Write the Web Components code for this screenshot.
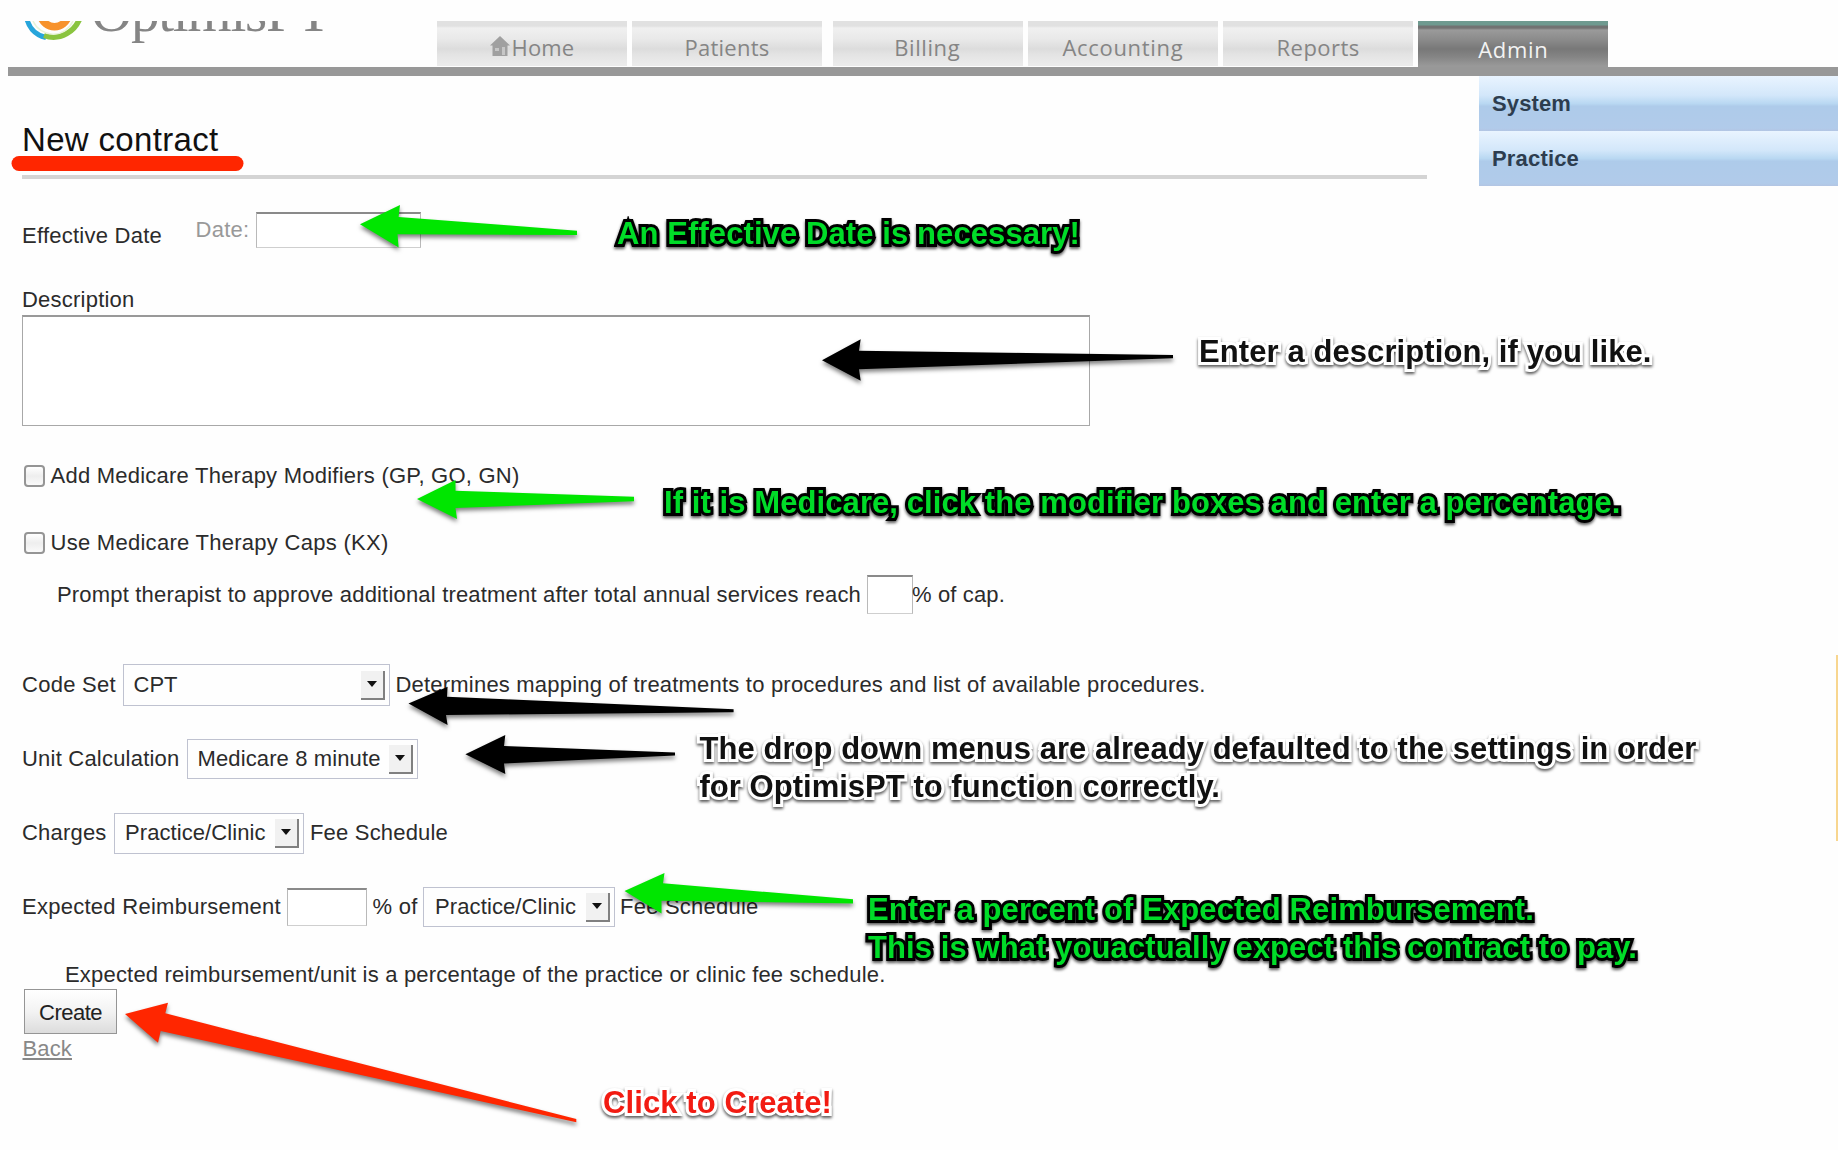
<!DOCTYPE html>
<html lang="en">
<head>
<meta charset="utf-8">
<title>New contract</title>
<style>
html,body{margin:0;background:#fefefe;overflow:hidden}
body{width:1838px;height:1150px;font:22px/26px "Liberation Sans",Arial,sans-serif;color:#2b2b2b}
</style>
</head>
<body>
<contract-page></contract-page>
<script>
function define(name, html, setup) {
  customElements.define(name, class extends HTMLElement {
    connectedCallback() {
      if (this.shadowRoot) return;
      const t = document.createElement('template');
      t.innerHTML = html;
      this.attachShadow({ mode: 'open' }).append(t.content.cloneNode(true));
      if (setup) setup(this, this.shadowRoot);
    }
  });
}

define('contract-page', `
<style>
:host{display:flex;flex-direction:column;position:relative;width:1838px;height:1150px;overflow:hidden;padding-top:21px;box-sizing:border-box}
main{display:flex;justify-content:space-between;flex:1}
note-layer{position:absolute;left:0;top:0}
</style>
<app-header></app-header>
<main><contract-form></contract-form><side-menu></side-menu></main>
<note-layer></note-layer>`);

define('app-header', `
<style>
:host{display:flex;height:54.5px;margin-left:8px;overflow:hidden;flex-direction:column;flex:none}
.top{display:flex;height:45.5px;overflow:hidden}
.bar{height:9px;background:#989898;flex:none}
brand-logo{width:429px}
nav{display:flex}
nav-tab{margin-right:5.5px}
nav-tab.wide{margin-right:11px}
</style>
<div class="top"><brand-logo></brand-logo>
<nav>
<nav-tab home><fit-text w="62.5">Home</fit-text></nav-tab>
<nav-tab class="wide"><fit-text w="85">Patients</fit-text></nav-tab>
<nav-tab><fit-text w="66" style="margin-right:1px">Billing</fit-text></nav-tab>
<nav-tab><fit-text w="121">Accounting</fit-text></nav-tab>
<nav-tab><fit-text w="83">Reports</fit-text></nav-tab>
<nav-tab active><fit-text w="70">Admin</fit-text></nav-tab>
</nav></div><div class="bar"></div>`);

define('brand-logo', `
<style>
:host{display:flex;height:45px;overflow:hidden;position:relative;flex:none}
svg{width:78px;height:22px;flex:none}
.t{font:57px/60px "Liberation Serif",serif;color:#858585;margin-left:5px;margin-top:-39px}
</style>
<svg viewBox="8 21 78 22"><g fill="none">
<path d="M26 13C27 27 35 35 46 37.500" stroke="#27a5db" stroke-width="5"/>
<path d="M44 35.500C60 41 76 32 81 15" stroke="#8ac43f" stroke-width="5.500"/>
<path d="M33 21C40 37 64 40 73 21" stroke="#e9f3d8" stroke-width="1.500"/>
<path d="M40 14C44 31 65 31 69 14" stroke="#f7922c" stroke-width="7.500"/>
</g></svg>
<fit-text class="t" w="239">OptimisPT</fit-text>`);

define('nav-tab', `
<style>
:host{display:flex;justify-content:center;width:189.700px;height:45px;box-sizing:border-box;padding-top:11px;color:#858585;font:22px/30px "Open Sans","Noto Sans",sans-serif;
background:linear-gradient(#e1e1e1 0 5px,#f0f0f0 7px,#e9e9e9 18px,#dcdcdc 28px,#e3e3e3 33px,#ebebeb 43px)}
:host([active]){height:46px;padding-top:13px;color:#f3f3f3;background:linear-gradient(#6f9a90 0 4px,#727272 5px 7px,#9a9a9a 9px,#8c8c8c 18px,#787878 28px,#858585 36px,#999 45px)}
svg{display:none;width:20px;height:20px;margin:4px 2px 0 0}
:host([home]) svg{display:block}
</style>
<svg viewBox="0 0 20 20"><path d="M10 0L20 9.500H17.500V20H2.500V9.500H0Z" fill="#a0a0a0"/><path d="M5 12h4v3H5zM12 11h3v8h-3z" fill="#c6c6c6"/></svg>
<slot></slot>`);

define('side-menu', `
<style>
:host{display:flex;flex-direction:column;width:359px;flex:none}
.item{height:55px;box-sizing:border-box;padding:15.500px 0 0 13px;font-weight:bold;color:#2d3d4f;background:linear-gradient(#e9f4ff 0,#d3e7fa 35%,#b9d8f2 50%,#aecbea 55%,#b1cbea 95%,#b3c5e3)}
.tip{width:2px;height:186px;background:#f8d68f;margin:469px 0 0 auto}
</style>
<div class="item"><fit-text w="79">System</fit-text></div>
<div class="item"><fit-text w="87">Practice</fit-text></div>
<div class="tip"></div>`);

define('contract-form', `
<style>
:host{display:flex;flex-direction:column;width:1405px;margin-left:22px}
h1{font:33px/38px "Liberation Sans",Arial,sans-serif;color:#111;margin:45.500px 0 0 0;height:38px}
hr{width:1405px;height:4px;border:0;background:#d4d4d4;margin:15.500px 0 0}
form-row{height:26px}
textarea{display:block;box-sizing:border-box;width:1068px;height:111px;margin:2px 0 0;border:1.500px solid #a8a8a8;border-top:2px solid #999;resize:none;background:#fff}
.grey{color:#999}
a{color:#888;text-decoration:underline;text-underline-offset:2px;margin:2px 0 0 .5px}
button{width:93px;height:45px;margin:1px 0 0 2px;padding:2px 0 0;border:1.500px solid #959595;background:linear-gradient(#fff,#f3f3f3 50%,#dcdcdc);font:inherit;color:#222}
</style>
<h1><fit-text w="196.5">New contract</fit-text></h1>
<hr>
<form-row style="height:36px;margin-top:33.500px">
<fit-text w="140" style="margin-top:11px">Effective Date</fit-text>
<fit-text class="grey" w="54" style="margin-left:33.500px">Date:</fit-text>
<text-box style="width:165px;height:36px;margin-left:6.500px"></text-box></form-row>
<form-row style="margin-top:39px"><fit-text w="112.5">Description</fit-text></form-row>
<textarea></textarea>
<form-row style="margin-top:37px"><check-box></check-box><fit-text w="469" style="margin-left:6px">Add Medicare Therapy Modifiers (GP, GO, GN)</fit-text></form-row>
<form-row style="margin-top:41px"><check-box></check-box><fit-text w="338" style="margin-left:6px">Use Medicare Therapy Caps (KX)</fit-text></form-row>
<form-row style="height:39px;margin-top:19px"><fit-text w="804" style="margin-left:35px">Prompt therapist to approve additional treatment after total annual services reach</fit-text><text-box style="width:45.500px;height:39px;margin-left:6px"></text-box><fit-text w="93" style="margin-left:-.5px">% of cap.</fit-text></form-row>
<form-row style="height:42px;margin-top:50px"><fit-text w="94">Code Set</fit-text><drop-down style="width:267px;margin-left:6.500px"><fit-text w="44">CPT</fit-text></drop-down><fit-text w="810" style="margin-left:6px">Determines mapping of treatments to procedures and list of available procedures.</fit-text></form-row>
<form-row style="height:40px;margin-top:33px"><fit-text w="157.5">Unit Calculation</fit-text><drop-down style="width:231px;margin-left:7px"><fit-text w="183">Medicare 8 minute</fit-text></drop-down></form-row>
<form-row style="height:41px;margin-top:33.500px"><fit-text w="84.5">Charges</fit-text><drop-down style="width:189.500px;margin-left:7.500px"><fit-text w="140.500">Practice/Clinic</fit-text></drop-down><fit-text w="138" style="margin-left:6.500px">Fee Schedule</fit-text></form-row>
<form-row style="height:40px;margin-top:33.500px"><fit-text w="259">Expected Reimbursement</fit-text><text-box style="width:80px;height:38px;margin-left:5.500px"></text-box><fit-text w="45" style="margin-left:6px">% of</fit-text><drop-down style="width:192px;margin-left:5.500px"><fit-text w="141" style="margin-left:1px">Practice/Clinic</fit-text></drop-down><fit-text w="138.5" style="margin-left:5px">Fee Schedule</fit-text></form-row>
<form-row style="margin-top:35px"><fit-text w="820.5" style="margin-left:43px">Expected reimbursement/unit is a percentage of the practice or clinic fee schedule.</fit-text></form-row>
<button><fit-text w="63">Create</fit-text></button>
<a><fit-text w="49.5">Back</fit-text></a>`);

define('form-row', `<style>:host{display:flex;align-items:center;flex:none}</style><slot></slot>`);
define('text-box', `<style>:host{display:block;flex:none;box-sizing:border-box;background:#fff;border:1.500px solid #b9b9b9;border-top:2px solid #8a8a8a;border-bottom-color:#cfcfcf}</style>`);
define('check-box', `<style>:host{display:block;flex:none;box-sizing:border-box;width:21px;height:22px;margin-left:1.500px;border:2px solid #959595;border-radius:4px;background:linear-gradient(#fff,#eee 50%,#fafafa)}</style>`);
define('drop-down', `
<style>
:host{display:flex;flex:none;align-items:center;justify-content:space-between;align-self:stretch;box-sizing:border-box;border:1.500px solid #bfc2d0;background:#fefefe;padding:0 4px 0 10px}
.b{display:flex;align-items:center;justify-content:center;width:24px;height:29px;box-sizing:border-box;background:#f1f1f1;border-right:2.500px solid #808080;border-bottom:2.500px solid #808080}
svg{width:10px;height:6px}
</style><slot></slot><span class="b"><svg viewBox="0 0 10 6"><path d="M0 0H10L5 6Z" fill="#111"/></svg></span>`);

define('note-layer', `
<style>
:host{display:block;width:1838px;height:1150px;pointer-events:none}
svg{position:absolute;left:0;top:0}
.s{filter:drop-shadow(0 3px 2px rgba(0,0,0,.5))}
call-out{position:absolute}
</style>
<svg width="1838" height="1150" viewBox="0 0 1838 1150">
<rect x="11.500" y="156" width="232" height="15" rx="7.500" fill="#ff2600"/>
<g class="s"><g fill="#00e600">
<path d="M360 224.300L400 205L398.600 217L577 230.700V235L397.500 234.300L398.600 247.500Z"/>
<path d="M417 499L455.500 480V490.700L634 496.700V501.300L455.500 508L457 519Z"/>
<path d="M624.500 891L664.500 873L663 883.300L853 899.300V903.500L661.500 900.700V913.500Z"/></g>
<g fill="#000">
<path d="M822 360.300L860.700 339.300L859 350.700L1173 355V358.300L859 369.300L860.700 380.700Z"/>
<path d="M408.500 703.500L447.600 686.700L447 696.700L733.600 709.300V712.300L446 715L447.600 725Z"/>
<path d="M465.400 754.300L505.300 735L504 746L675 752.500V755.500L504 763.500L505.300 774Z"/></g>
<path fill="#ff2600" d="M125 1014L168 1002.700L165.300 1013.300L576.300 1119V1122.300L160.700 1031L158 1042.700Z"/></g>
</svg>
<call-out kind="green" style="left:617px;top:215px"><fit-text w="463">An Effective Date is necessary!</fit-text></call-out>
<call-out kind="black" style="left:1199px;top:333px"><fit-text w="452.5">Enter a description, if you like.</fit-text></call-out>
<call-out kind="green" style="left:664px;top:484px"><fit-text w="956.5">If it is Medicare, click the modifier boxes and enter a percentage.</fit-text></call-out>
<call-out kind="black" style="left:699.500px;top:730px"><fit-text w="997">The drop down menus are already defaulted to the settings in order</fit-text><fit-text w="520.5">for OptimisPT to function correctly.</fit-text></call-out>
<call-out kind="green" style="left:868px;top:891px"><fit-text w="666">Enter a percent of Expected Reimbursement.</fit-text><fit-text w="769">This is what youactually expect this contract to pay.</fit-text></call-out>
<call-out kind="red" style="left:603px;top:1084px"><fit-text w="229">Click to Create!</fit-text></call-out>`);

define('call-out', `
<style>
:host{display:flex;flex-direction:column;align-items:flex-start;font:bold 31px/37.700px "Liberation Sans",Arial,sans-serif;paint-order:stroke fill;-webkit-text-stroke:6px #fff;color:#111;filter:drop-shadow(0 2px 1.500px rgba(0,0,0,.65))}
:host([kind=green]){-webkit-text-stroke:6px #000;color:#00dc28}
:host([kind=red]){color:#f21b12}
</style><slot></slot>`);

/* Spreads its text over the advance width given in "w". */
define('fit-text', `<style>:host{display:inline-block;white-space:nowrap;flex:none;paint-order:inherit;text-decoration:inherit}span{display:inline-block;text-decoration:inherit;paint-order:inherit}</style><span><slot></slot></span>`, (el, root) => {
  const w = +el.getAttribute('w'), n = el.textContent.length;
  const s = root.querySelector('span');
  s.style.letterSpacing = ((w - s.getBoundingClientRect().width) / n) + 'px';
  el.style.width = w + 'px';
});
</script>
</body>
</html>
